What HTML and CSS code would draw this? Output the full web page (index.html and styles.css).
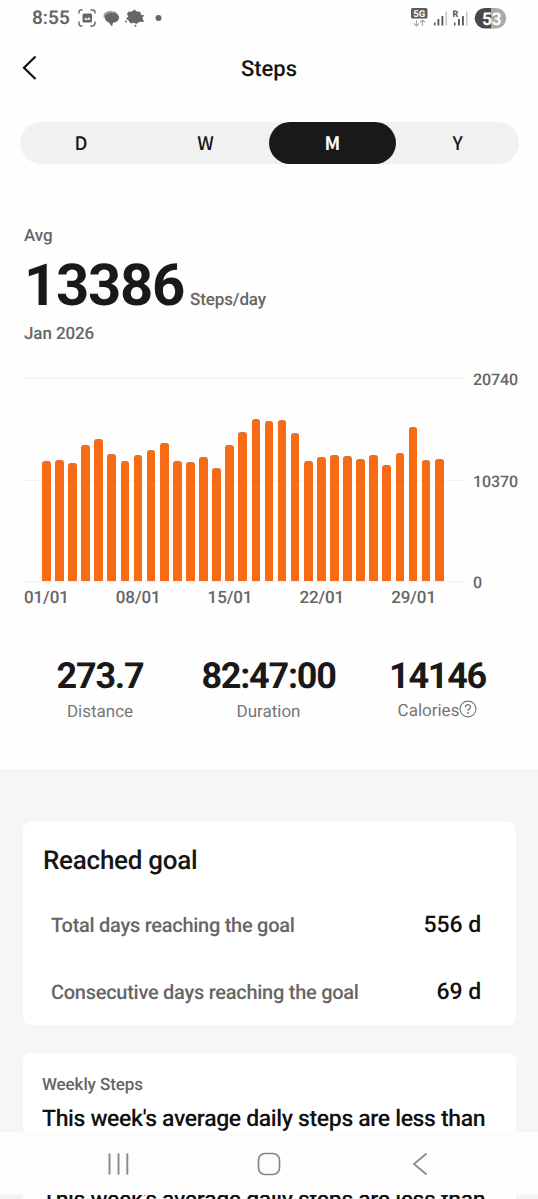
FILE: index.html
```html
<!DOCTYPE html>
<html lang="en">
<head>
<meta charset="utf-8">
<title>Steps</title>
<link rel="stylesheet" href="styles.css">
</head>
<body>
<div class="screen">
  <header class="status">
    <span class="clock">8:55</span>
    <svg class="status-left" width="90" height="20" viewBox="0 0 90 20">
      <g fill="none" stroke="#666" stroke-width="1.4" stroke-linecap="round">
        <path d="M1 5V4Q1 2 3 2H4M13 2H14Q17 2 17 4V5M1 14V15Q1 18 3 18H4M13 18H14Q17 18 17 15V14"/>
      </g>
      <rect x="4.500" y="5.500" width="9.500" height="9" rx="1.500" fill="#666"/>
      <path d="M6 11.800L8 9.500L9.500 11L11 9L12.500 11.800Z" fill="#fff"/>
      <path d="M25.500 9C25 5 28.500 2.800 33 3L38 4L40 7L28 11Z" fill="#999"/>
      <path d="M27 9.500C27 6.500 30 5 34 5C38 5 41 6.500 41 9.500C41 12.500 38.500 14.500 35 14.700L34 18.500L30.500 14.200C28 13.500 27 11.800 27 9.500Z" fill="#666"/>
      <path d="M50.500 4L53.500 4L56.500 2L59 4L62 4L62.500 7L65.500 7.500L64 10L65.500 13.500L61.500 13.500L58.500 15.500L56 14.500L52.500 15L51 12.500L48.500 10.500L50.500 8.500L49.500 6Z" fill="#666" stroke="#666" stroke-width=".8" stroke-linejoin="round"/>
      <circle cx="48" cy="13.500" r="1" fill="#666"/><circle cx="57.500" cy="17.800" r="1" fill="#666"/>
      <circle cx="80.500" cy="10" r="3" fill="#666"/>
    </svg>
    <svg class="status-right" width="96" height="22" viewBox="0 0 96 22">
      <rect x="0" y="0" width="16.500" height="10.500" rx="1.500" fill="#5d5d5d"/>
      <text class="net" x="8.250" y="8.800">5G</text>
      <path d="M5.500 12V18M3 15.500L5.500 18L8 15.500M11.500 18V12M9 14.500L11.500 12L14 14.500" fill="none" stroke="#aaa" stroke-width="1.100"/>
      <g fill="#555"><rect x="23" y="14.500" width="1.500" height="3"/><rect x="26.500" y="11" width="1.800" height="6.500"/><rect x="30.500" y="8" width="1.800" height="9.500"/></g>
      <rect x="34.500" y="3.500" width="1.500" height="14" fill="#c4c4c4"/>
      <text class="roam" x="41.500" y="9">R</text>
      <g fill="#555"><rect x="43" y="14.500" width="1.500" height="3"/><rect x="47" y="11" width="1.800" height="6.500"/><rect x="51" y="8" width="1.800" height="9.500"/></g>
      <rect x="55" y="3.500" width="1.500" height="14" fill="#c4c4c4"/>
      <path d="M80.500 0H74A10.300 10.300 0 0 0 74 20.600H80.500Z" fill="#484848"/>
      <path d="M80.500 0H85A10.300 10.300 0 0 1 85 20.600H80.500Z" fill="#aaa"/>
      <text class="battery" x="80.500" y="16.500">53</text>
    </svg>
  </header>

  <div class="titlebar">
    <svg class="back" width="16" height="26" viewBox="0 0 16 26"><path d="M13.500 1.500L2 12.800L13.500 24" fill="none" stroke="#111" stroke-width="2.200"/></svg>
    <h1 class="title">Steps</h1>
  </div>

  <nav class="tabs">
    <span class="tab">D</span><span class="tab">W</span><span class="tab tab-active">M</span><span class="tab">Y</span>
  </nav>

  <section class="summary">
    <p class="muted">Avg</p>
    <p class="average"><strong class="big">13386</strong><span class="muted unit">Steps/day</span></p>
    <p class="muted month">Jan 2026</p>
  </section>

  <section class="chart">
    <div class="plot">
      <div class="bars" id="bars"></div>
      <div class="dates"><span>01/01</span><span>08/01</span><span>15/01</span><span>22/01</span><span>29/01</span></div>
    </div>
    <div class="scale"><span>20740</span><span>10370</span><span>0</span></div>
  </section>

  <section class="totals">
    <div class="total distance"><strong>273.7</strong><span>Distance</span></div>
    <div class="total duration"><strong>82:47:00</strong><span>Duration</span></div>
    <div class="total calories"><strong>14146</strong><span class="help-label">Calories<svg width="18" height="18" viewBox="0 0 18 18"><circle cx="9" cy="9" r="7.900" fill="none" stroke="#777" stroke-width="1.100"/><path d="M6.500 7.300C6.500 3.800 11.500 3.900 11.500 7C11.500 9 9 8.800 9 11" fill="none" stroke="#777" stroke-width="1.300"/><circle cx="9" cy="13" r=".9" fill="#777"/></svg></span></div>
  </section>

  <main class="cards">
    <section class="card goal">
      <h2>Reached goal</h2>
      <div class="row"><span>Total days reaching the goal</span><b>556 d</b></div>
      <div class="row"><span>Consecutive days reaching the goal</span><b>69 d</b></div>
    </section>
    <section class="card weekly">
      <p class="weekly-label">Weekly Steps</p>
      <p class="weekly-text">This week's average daily steps are less than</p>
    </section>
  </main>

  <footer class="navbar">
    <svg width="24" height="24" viewBox="0 0 24 24"><path d="M2.500 1.500V22.500M11.500 1.500V22.500M20.300 1.500V22.500" stroke="#888" stroke-width="1.900"/></svg>
    <svg width="24" height="24" viewBox="0 0 24 24"><rect x="1.500" y="1.500" width="21" height="21" rx="6.500" fill="none" stroke="#888" stroke-width="1.700"/></svg>
    <svg width="24" height="24" viewBox="0 0 24 24"><path d="M19.500 1.500L7 12L19.500 22.500" fill="none" stroke="#888" stroke-width="1.700"/></svg>
  </footer>
  <div class="peek"><div class="peek-card"><p class="weekly-text">This week's average daily steps are less than</p></div></div>
</div>
<script src="chart.js"></script>
</body>
</html>
```
FILE: styles.css
```css
* { box-sizing: border-box; margin: 0; padding: 0; }
body { background: #fff; font-family: Roboto, "Liberation Sans", sans-serif; color: #161616; text-rendering: geometricPrecision; }
svg { display: block; flex: none; }
.screen { width: 538px; height: 1199px; overflow: hidden; display: flex; flex-direction: column; background: #fefefe; white-space: nowrap; }
.screen > * { flex: none; }
.status { height: 36px; display: flex; align-items: center; padding: 0 31px 0 32px; }
.clock { font-size: 19px; font-weight: 600; color: #666; width: 46px; margin-top: -1px; }
.status-right { margin-left: auto; margin-top: 2px; }
.net { font: 700 9.5px Roboto, sans-serif; fill: #fff; text-anchor: middle; }
.roam { font: 700 9px Roboto, sans-serif; fill: #555; }
.battery { font: 700 17.5px Roboto, sans-serif; fill: #fff; text-anchor: middle; letter-spacing: -.5px; }
.titlebar { height: 86px; display: grid; grid-template-columns: 40px 1fr 40px; align-items: start; padding: 19px 0 0; }
.back { margin-left: 22px; }
.title { font-size: 22px; line-height: 30px; font-weight: 500; text-align: center; }
.tabs { height: 42px; margin: 0 19px 0 20px; border-radius: 21px; background: #f1f1f1; display: grid; grid-template-columns: 122px 127px 127px 1fr; font-family: "Noto Sans CJK SC", sans-serif; font-size: 18.5px; font-weight: 500; line-height: 43px; text-align: center; }
.tab-active { height: 42px; background: #191919; color: #fff; border-radius: 21px; font-weight: 700; }
.summary { height: 206px; padding: 61px 24px 0; }
.muted { font-size: 17px; line-height: 22px; font-weight: 500; color: #666; letter-spacing: -.1px; }
.average { height: 72px; display: flex; align-items: baseline; }
.big { font-size: 58px; line-height: 78px; font-weight: 700; color: #191919; width: 166px; letter-spacing: -1.3px; }
.month { margin-top: 4px; }
.chart { height: 250px; padding: 8px 0 0 24px; display: flex; }
.plot { width: 440px; }
.bars { height: 204px; border-top: 1px solid #f1f1f1; border-bottom: 1px solid #f1f1f1; background: linear-gradient(#f3f3f3, #f3f3f3) 0 101px / 100% 1px no-repeat; display: flex; align-items: flex-end; gap: 4.42px; padding-left: 18px; }
.bar { flex: none; width: 8.7px; background: #f76b15; border-radius: 3px 3px 0 0; border-top: 1px solid #cc7845; }
.dates { display: flex; justify-content: space-between; width: 412px; margin-top: 5px; font-size: 17px; line-height: 22px; font-weight: 500; color: #666; letter-spacing: -.1px; }
.scale { height: 225px; margin: -9px 0 0 9px; display: flex; flex-direction: column; justify-content: space-between; font-size: 16px; line-height: 22px; font-weight: 500; color: #666; letter-spacing: -.1px; }
.totals { height: 149px; display: grid; grid-template-columns: 200px 137px 201px; padding-top: 35px; }
.total { text-align: center; }
.total strong { display: block; font-size: 36px; line-height: 42px; font-weight: 700; color: #191919; letter-spacing: -1.25px; }
.total span { font-size: 17px; line-height: 22px; color: #777; display: block; margin-top: 4px; }
.total .help-label { display: flex; justify-content: center; margin-top: 3px; }
.cards { height: 363px; background: #f6f6f6; padding: 53px 22px 0 23px; overflow: hidden; }
.card { background: #fff; border-radius: 8px; }
.goal { height: 203px; padding: 22px 35px 0 28px; }
.goal h2 { font-size: 26px; line-height: 34px; font-weight: 500; margin-left: -8px; letter-spacing: -.25px; }
.row { display: flex; justify-content: space-between; align-items: center; height: 67px; color: #666; font-size: 20px; font-weight: 500; letter-spacing: -.27px; }
.row:nth-child(2) { margin-top: 13px; }
.row b { color: #111; font-size: 23px; font-weight: 500; letter-spacing: -.1px; }
.weekly { height: 150px; margin-top: 28px; padding: 21px 19px; }
.weekly-label { font-size: 17px; line-height: 22px; font-weight: 500; color: #666; letter-spacing: -.1px; }
.weekly-text { font-size: 23px; line-height: 30px; font-weight: 500; color: #111; margin-top: 8px; letter-spacing: -.36px; }
.navbar { height: 63px; background: #fdfdfd; display: flex; justify-content: space-between; align-items: center; padding: 0 107px; }
.peek { height: 4px; background: #f3f3f3; padding: 0 22px 0 23px; }
.peek-card { height: 4px; overflow: hidden; background: #fff; padding-left: 19px; }
.peek-card .weekly-text { margin-top: -10px; }
```
FILE: chart.js
```js
const heights = [120.3, 121, 118, 136.3, 142.3, 127.3, 120, 125.7, 130.7, 138.3, 120.3, 119.3, 124, 113.3, 135.7, 149.3, 162.3, 159.7, 161.3, 148.3, 120, 124, 126.3, 125.3, 122.3, 126.3, 116, 128.3, 154, 121.3, 122.3];
const bars = document.getElementById("bars");
heights.forEach((height) => {
  const bar = document.createElement("div");
  bar.className = "bar";
  bar.style.height = height + "px";
  bars.appendChild(bar);
});
```
